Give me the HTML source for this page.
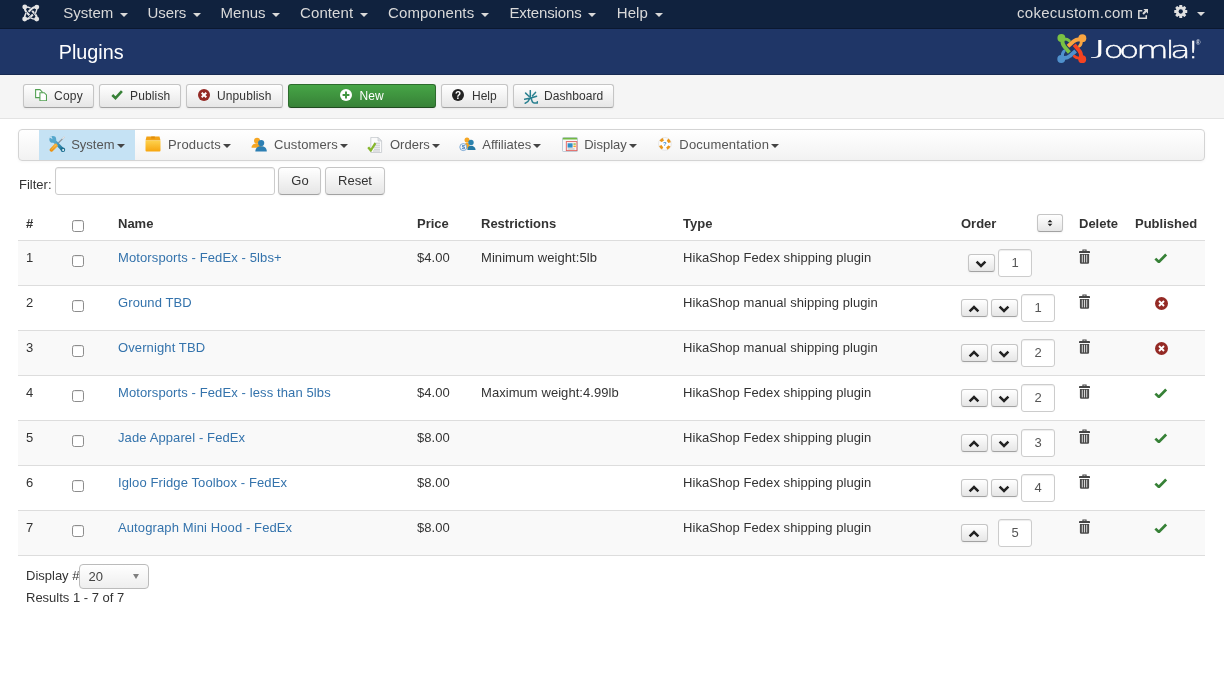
<!DOCTYPE html>
<html lang="en"><head><meta charset="utf-8"><title>Plugins</title>
<style>
*{box-sizing:border-box}
html,body{margin:0;padding:0}
#w{position:absolute;left:0;top:0;width:1224px;height:681px;will-change:transform}
body{width:1224px;height:681px;overflow:hidden;background:#fff;font-family:"Liberation Sans",Arial,sans-serif;font-size:13px;line-height:18px;color:#333;position:relative}
a{color:#3071a9;text-decoration:none}
svg{display:block}
.nav{position:absolute;left:0;top:0;width:1224px;height:28px;background:#10223e}
.nav .it{position:absolute;top:0;height:28px;line-height:25px;font-size:15px;letter-spacing:.12px;color:#d9d9d9;white-space:nowrap}
.caret{display:inline-block;width:0;height:0;border-left:4px solid transparent;border-right:4px solid transparent;border-top:4px solid #d9d9d9;vertical-align:middle;margin-left:2.5px;margin-top:1px}
.hdr{position:absolute;left:0;top:28px;width:1224px;height:47px;background:#1f3667;border-top:1px solid #0b1830;border-bottom:1px solid #172a52}
.hdr h1{position:absolute;left:58.7px;top:0;margin:0;font-weight:normal;font-size:19.8px;line-height:46px;color:#fff}
.sub{position:absolute;left:0;top:75px;width:1224px;height:44px;background:#f5f5f5;border-bottom:1px solid #e3e3e3}
.btn{position:absolute;top:9px;height:24px;border:1px solid #bbb;border-color:#c5c5c5 #c5c5c5 #a2a2a2;border-radius:3px;background:linear-gradient(#fff,#e6e6e6);font-size:12px;line-height:22px;color:#333;white-space:nowrap;box-shadow:0 1px 2px rgba(0,0,0,.05)}
.btn span{position:absolute;top:0}
.btn svg{position:absolute}
.btn.green{background:linear-gradient(#46a546,#378137);border-color:#2d6b2d #2d6b2d #1f4a1f;color:#fff}
.menu{position:absolute;left:18px;top:129px;width:1187px;height:32px;border:1px solid #d4d4d4;border-radius:4px;background:linear-gradient(#fff,#f2f2f2);box-shadow:0 1px 3px rgba(0,0,0,.04)}
.menu .mi{position:absolute;top:0;height:30px;line-height:29.500px;font-size:13px;color:#555;white-space:nowrap}
.menu .act{position:absolute;left:20px;top:0;width:96px;height:30px;background:#c5e2f4}
.menu svg{position:absolute}
.c2{display:inline-block;width:0;height:0;border-left:4px solid transparent;border-right:4px solid transparent;border-top:4px solid #444;vertical-align:middle;margin-left:2px}
.flt{position:absolute;left:19px;top:176px;font-size:13px}
.finp{position:absolute;left:55px;top:167px;width:220px;height:28px;border:1px solid #ccc;border-radius:3px;background:#fff;box-shadow:inset 0 1px 1px rgba(0,0,0,.075)}
.fbtn{position:absolute;top:167px;height:28px;border:1px solid #bbb;border-color:#c5c5c5 #c5c5c5 #a2a2a2;border-radius:4px;background:linear-gradient(#fff,#e6e6e6);font-size:13px;line-height:26px;text-align:center;color:#333;box-shadow:0 1px 2px rgba(0,0,0,.05)}
.tbl{position:absolute;left:18px;top:206px;width:1187px;height:350px}
.th{position:absolute;top:9px;font-weight:bold;white-space:nowrap}
.row{position:absolute;left:0;width:1187px;height:45px;border-top:1px solid #ddd}
.row.odd{background:#f9f9f9}
.tbl{border-bottom:1px solid #ddd}
.td{position:absolute;top:8px;white-space:nowrap;letter-spacing:.06px}
.td a{letter-spacing:.11px;color:#3473ac}
.cb{position:absolute;left:54px;width:12px;height:12px;border:1px solid #8d8d8d;border-radius:2.5px;background:#fff;box-shadow:inset 0 1px 1px rgba(0,0,0,.08)}
.ob{position:absolute;top:13px;width:27px;height:18px;border:1px solid #bbb;border-color:#c5c5c5 #c5c5c5 #a2a2a2;border-radius:3px;background:linear-gradient(#fff,#e6e6e6);box-shadow:0 1px 2px rgba(0,0,0,.05)}
.ob svg{position:absolute;left:6px;top:4.500px}
.sbtn{width:26px}
.sbtn svg{left:9px;top:4px}
.oi{position:absolute;top:8px;width:34px;height:28px;border:1px solid #ccc;border-radius:3px;background:#fff;text-align:center;line-height:26px;color:#555;box-shadow:inset 0 1px 1px rgba(0,0,0,.075)}
.trash{position:absolute;left:1061px;top:8px}
.pub{position:absolute;left:1136.300px;top:11.800px}
.unpub{position:absolute;left:1137px;top:11px}
.foot1{position:absolute;left:26px;top:567px}
.foot2{position:absolute;left:26px;top:589px}
.sel{position:absolute;left:79px;top:564px;width:70px;height:25px;border:1px solid #bbb;border-radius:4px;background:linear-gradient(#fff,#eee);padding-left:8.500px;line-height:24px;color:#444}
.sel i{position:absolute;right:9px;top:9px;width:0;height:0;border-left:3.800px solid transparent;border-right:3.800px solid transparent;border-top:5px solid #808080}
</style></head><body><div id="w">
<div class="nav">
 <svg style="position:absolute;left:20.200px;top:3.100px" viewBox="0 0 717 681" width="22.200" height="21.100">
  <defs><g id="jw"><g fill="none" stroke="#10223e" stroke-linejoin="round"><path d="M155 130Q148 235 200 287L312 405" stroke-width="92"/><path d="M155 130Q265 120 350 172" stroke-width="66" stroke-linecap="round"/></g><g fill="none" stroke="#e4e4e4" stroke-linejoin="round"><path d="M155 130Q148 235 200 287L303 396" stroke-width="68"/><path d="M155 130Q265 120 350 172" stroke-width="48" stroke-linecap="round"/><circle cx="155" cy="130" r="80" fill="#e4e4e4" stroke="none"/></g></g></defs>
  <use href="#jw"/><use href="#jw" transform="rotate(270 347.500 325)"/><use href="#jw" transform="rotate(180 347.500 325)"/><use href="#jw" transform="rotate(90 347.500 325)"/>
 </svg>
 <span class="it" style="left:63.3px;letter-spacing:0">System <span class="caret"></span></span>
 <span class="it" style="left:147.5px;letter-spacing:-.08px">Users <span class="caret"></span></span>
 <span class="it" style="left:220.6px;letter-spacing:0">Menus <span class="caret"></span></span>
 <span class="it" style="left:300.1px;letter-spacing:.07px">Content <span class="caret"></span></span>
 <span class="it" style="left:388px">Components <span class="caret"></span></span>
 <span class="it" style="left:509.4px;letter-spacing:-.11px">Extensions <span class="caret"></span></span>
 <span class="it" style="left:616.7px">Help <span class="caret"></span></span>
 <span class="it" style="left:1017px;letter-spacing:.27px">cokecustom.com</span>
 <svg style="position:absolute;left:1138px;top:8.500px" viewBox="0 0 10 10" width="10" height="10"><path d="M4.300 1.700H.8v7.500h7.500V6.200" fill="none" stroke="#d9d9d9" stroke-width="1.500"/><path d="M5.300 0h4.700v4.700L8.400 3.100 5.800 5.700 4.300 4.200 6.900 1.600z" fill="#d9d9d9"/></svg>
 <svg style="position:absolute;left:1174px;top:5px" viewBox="0 0 14 14" width="13.500" height="13"><g fill="#e0e0e0"><circle cx="7" cy="7" r="5.300"/><g id="gt"><rect x="5.400" y="0" width="3.200" height="14" rx=".6"/><rect x="0" y="5.400" width="14" height="3.200" rx=".6"/></g><use href="#gt" transform="rotate(45 7 7)"/></g><circle cx="7" cy="7" r="2.300" fill="#10223e"/></svg>
 <span class="caret" style="position:absolute;left:1197px;top:12px;margin:0"></span>
</div>
<div class="hdr"><h1>Plugins</h1>
 <svg style="position:absolute;left:1052.800px;top:1.900px" viewBox="0 0 717 681" width="38.800" height="36.850">
  <defs><g id="jp" fill="none" stroke="currentColor" stroke-linejoin="round"><path d="M176 150Q166 240 212 290L303 396" stroke-width="72"/><path d="M176 150Q262 140 300 182" stroke-width="54" stroke-linecap="round"/><circle cx="155" cy="130" r="73" fill="currentColor" stroke="none"/></g></defs>
  <use href="#jp" color="#7ac143"/>
  <use href="#jp" color="#5091cd" transform="rotate(270 347.500 325)"/>
  <use href="#jp" color="#f44321" transform="rotate(180 347.500 325)"/>
  <use href="#jp" color="#f9a541" transform="rotate(90 347.500 325)"/>
 </svg>
 <svg style="position:absolute;left:1088px;top:4px;overflow:visible" width="124" height="36"><g transform="translate(10.800 24.800) scale(1.400 1)"><text x="0" y="0" font-family="'DejaVu Sans Light','DejaVu Sans',sans-serif" font-weight="200" font-size="23.800" fill="#fff" stroke="#fff" stroke-width=".4" dx="-5.700 -3.900 -3.600 -2.200 -2.200 -3.300 -3"><tspan font-size="19.500" dy="-3.900" textLength="13" lengthAdjust="spacingAndGlyphs" stroke="none">J</tspan><tspan dy="3.900">oomla!</tspan></text></g>
  <text x="107.700" y="11.800" font-family="'Liberation Sans',sans-serif" font-weight="bold" font-size="6.500" fill="#d4dbe8">®</text>
 </svg>
</div>
<div class="sub">
 <div class="btn" style="left:23px;width:71px"><svg style="left:11px;top:3.500px" viewBox="0 0 12 12" width="12.300" height="12.300"><g fill="#fff" stroke="#52a052" stroke-width="1.050"><path d="M.6 .6h4.200l2.200 2.200v5.600H.6z"/><path d="M4.800 3.600h4.200l2.200 2.200v5.600H4.800z"/></g></svg><span style="left:30px;letter-spacing:.25px">Copy</span></div>
 <div class="btn" style="left:99px;width:82px"><svg style="left:10.800px;top:5px" viewBox="0 0 12 9.500" width="12" height="9.500"><path d="M1.300 5l3.200 3.100 6.400-6.900" fill="none" stroke="#378137" stroke-width="2.600"/></svg><span style="left:30px;letter-spacing:.14px">Publish</span></div>
 <div class="btn" style="left:186px;width:97px"><svg style="left:11px;top:4px" viewBox="0 0 13 13" width="12" height="12"><circle cx="6.500" cy="6.500" r="6.500" fill="#942a25"/><path d="M4 4l5 5M9 4l-5 5" stroke="#fff" stroke-width="2.100"/></svg><span style="left:30px;letter-spacing:.12px">Unpublish</span></div>
 <div class="btn green" style="left:288px;width:148px"><svg style="left:51px;top:4px" viewBox="0 0 12 12" width="12" height="12"><circle cx="6" cy="6" r="6" fill="#fff"/><path d="M6 2.600v6.800M2.600 6h6.800" stroke="#3f953f" stroke-width="1.900"/></svg><span style="left:70.500px;letter-spacing:.1px">New</span></div>
 <div class="btn" style="left:441px;width:67px"><svg style="left:10px;top:4px" viewBox="0 0 12 12" width="12" height="12"><circle cx="6" cy="6" r="6" fill="#222"/><text x="6" y="9.600" text-anchor="middle" font-family="'Liberation Sans',sans-serif" font-weight="bold" font-size="10" fill="#fff">?</text></svg><span style="left:30px">Help</span></div>
 <div class="btn" style="left:513px;width:101px"><svg style="left:10px;top:5px" viewBox="0 0 14 14" width="14" height="14"><g fill="none" stroke="#2a8090" stroke-width="1.500" stroke-linecap="round" stroke-linejoin="round"><path d="M6.300 .6V8.600M1.600 3.100L4.900 6.200M11.500 2.400L8.500 5.800M.6 9.300Q7 8.300 12.600 6.200M5.800 8.600Q4.500 12 1.200 13.300M7.300 8.100Q7.800 12.600 10.200 13.100H13.300V11.700"/></g></svg><span style="left:30px;letter-spacing:.05px">Dashboard</span></div>
</div>
<div class="menu"><div class="act"></div>
 <svg style="left:30px;top:6px" viewBox="0 0 16.500 16.500" width="16.500" height="16.500"><defs><linearGradient id="og" x1="1" y1="0" x2="0" y2="1"><stop offset="0" stop-color="#f7b740"/><stop offset="1" stop-color="#e98a06"/></linearGradient><linearGradient id="wg" x1="0" y1="0" x2="1" y2="1"><stop offset="0" stop-color="#5aabd0"/><stop offset=".5" stop-color="#3b8fb5"/><stop offset="1" stop-color="#1c6f90"/></linearGradient></defs><path d="M15.200 1.100L8 8.300" stroke="#8f9499" stroke-width="1.300" stroke-linecap="round"/><path d="M15.400 .9l-1.600 1.600" stroke="#e6e8ea" stroke-width="1.300" stroke-linecap="round"/><path d="M5.500 5.200L13.700 13.600" stroke="url(#wg)" stroke-width="3.500" stroke-linecap="round"/><circle cx="3.800" cy="3.400" r="3.400" fill="#55a7cc"/><path d="M.2 1.200L3.600 3.200 2.400 .1z" fill="#c5e2f4"/><circle cx="13.900" cy="13.700" r="2.300" fill="#1d7091"/><circle cx="14.100" cy="13.900" r="1" fill="#eef7fc"/><path d="M8.600 8.900L7.300 7.600Q6.300 7.200 5.500 8L.9 12.900Q.1 14 1 15.100 2.200 16.300 3.400 15.400L8.300 10.800Q9.100 9.800 8.600 8.900z" fill="url(#og)"/><path d="M6.500 9.200L2.700 13.300" stroke="#fbd58a" stroke-width=".8" stroke-dasharray="1 .7"/></svg>
 <span class="mi" style="left:52.200px">System<span class="c2"></span></span>
 <svg style="left:125.500px;top:6.200px" viewBox="0 0 16 16" width="16" height="16"><defs><linearGradient id="bx" x1="0" y1="0" x2="0" y2="1"><stop offset="0" stop-color="#fdd24e"/><stop offset="1" stop-color="#f7a50e"/></linearGradient></defs><path d="M1.5 0.5h13l1 4H.5z" fill="#f2a216"/><rect x=".5" y="4.5" width="15" height="11" rx="1" fill="url(#bx)"/><rect x="6.2" y=".5" width="3.6" height="2" fill="#e08d0a"/></svg>
 <span class="mi" style="left:149px;letter-spacing:.2px">Products<span class="c2"></span></span>
 <svg style="left:232px;top:7px" viewBox="0 0 17 16" width="16" height="15"><circle cx="6.4" cy="4" r="3.2" fill="#f5a623"/><path d="M.5 11.5c0-3 2.4-4.6 5.9-4.6s5 1.600 5 4.600z" fill="#f5a623"/><circle cx="10.8" cy="6.400" r="3.300" fill="#2d7fb3"/><path d="M4.600 15.500c0-3.800 2.600-5.600 6.200-5.600s6 1.800 6 5.600z" fill="#2d7fb3"/></svg>
 <span class="mi" style="left:255px;letter-spacing:.1px">Customers<span class="c2"></span></span>
 <svg style="left:348px;top:6.500px" viewBox="0 0 16 16" width="16" height="16"><path d="M3.800 .4h7.200l3.600 3.600v11.500H3.800z" fill="#fbfbfb" stroke="#c3c7cb" stroke-width=".8"/><path d="M11 .4v3.600h3.600z" fill="#e3e6e9" stroke="#c3c7cb" stroke-width=".7"/><path d="M7 6.200h6M7 8.200h6M7 10.200h6M7 12.200h6M6 14h7" stroke="#b4b8bd" stroke-width=".8"/><path d="M1.200 10.200l2.600 3.300 4.600-7.300" fill="none" stroke="#86b62c" stroke-width="2.300" stroke-linejoin="round"/></svg>
 <span class="mi" style="left:371px">Orders<span class="c2"></span></span>
 <svg style="left:440.300px;top:6.500px" viewBox="0 0 17 16" width="17" height="16"><circle cx="8" cy="3" r="2.500" fill="#f5a623"/><path d="M5.300 11.500c-.2-3.800 .8-6 2.800-6s2.800 2 2.800 6z" fill="#f5a623"/><circle cx="12" cy="5.400" r="2.700" fill="#2b82ad"/><path d="M8.400 13c0-1.900 .6-3.300 2.300-4.300h2.600c1.700 1 3.300 1.800 3.300 4.300z" fill="#2479a4"/><circle cx="4.300" cy="10.100" r="3.500" fill="#f2f7fc" stroke="#6fa0cf" stroke-width=".9"/><text x="4.300" y="12.300" text-anchor="middle" font-family="'Liberation Sans',sans-serif" font-size="6" font-weight="bold" fill="#3b77b5">$</text></svg>
 <span class="mi" style="left:463.300px">Affiliates<span class="c2"></span></span>
 <svg style="left:543px;top:6.800px" viewBox="0 0 16 15" width="16" height="15"><rect x=".4" y=".4" width="15.200" height="14.200" rx="1.300" fill="#f7f8f9" stroke="#a9bccb" stroke-width=".8"/><path d="M.8 1.600a.8 .8 0 0 1 .8-.8h12.800a.8 .8 0 0 1 .8 .8v.9H.8z" fill="#73b943"/><rect x="4.300" y="4.600" width="10.600" height="9" fill="#fdf3f3" stroke="#e0605c" stroke-width=".9"/><rect x="5.600" y="6.300" width="5" height="4.300" fill="#2f8fc8"/><rect x="11.400" y="6.300" width="2.400" height="1.500" fill="#8cc152"/><rect x="11.400" y="8.600" width="2.400" height="1.500" fill="#f5a623"/><path d="M5.600 12h7" stroke="#9aa" stroke-width=".8"/></svg>
 <span class="mi" style="left:565.200px">Display<span class="c2"></span></span>
 <svg style="left:639.100px;top:7.100px" viewBox="0 0 15 15" width="13.800" height="13.800"><circle cx="7.500" cy="7.500" r="7" fill="#fbfbfb" stroke="#dcdcdc" stroke-width=".7"/><circle cx="7.500" cy="7.500" r="5.100" fill="none" stroke="#e9961a" stroke-width="3.400" stroke-dasharray="3.500 4.511" stroke-dashoffset="-2.255"/><circle cx="7.500" cy="7.500" r="3.500" fill="#fff"/><text x="7.500" y="9.800" text-anchor="middle" font-family="'Liberation Sans',sans-serif" font-size="6.500" font-weight="bold" fill="#3f8fd0">?</text></svg>
 <span class="mi" style="left:660.300px;letter-spacing:.19px">Documentation<span class="c2"></span></span>
</div>
<div class="flt">Filter:</div><div class="finp"></div>
<div class="fbtn" style="left:278px;width:43px;padding-left:1px">Go</div><div class="fbtn" style="left:325px;width:60px">Reset</div>
<div class="tbl">
<div class="th" style="left:8px">#</div><span class="cb" style="top:14px"></span><div class="th" style="left:100px">Name</div><div class="th" style="left:399px">Price</div><div class="th" style="left:463px">Restrictions</div><div class="th" style="left:665px">Type</div><div class="th" style="left:943px">Order</div><div class="sbtn ob" style="left:1019px;top:8px"><svg viewBox="0 0 6 8" width="6" height="8"><path d="M0.6 3.2L3 0.8l2.4 2.4zM0.6 4.8L3 7.2l2.4-2.4z" fill="#222"/></svg></div><div class="th" style="left:1061px">Delete</div><div class="th" style="left:1117px">Published</div>
<div class="row odd" style="top:34px"><div class="td" style="left:8px">1</div><span class="cb" style="top:14px"></span><div class="td" style="left:100px"><a>Motorsports - FedEx - 5lbs+</a></div><div class="td" style="left:399px">$4.00</div><div class="td" style="left:463px">Minimum weight:5lb</div><div class="td" style="left:665px">HikaShop Fedex shipping plugin</div><div class="ob" style="left:950px"><svg viewBox="0 0 12 8" width="12" height="8"><path d="M1.6 1.6L6 6l4.4-4.4" fill="none" stroke="#222" stroke-width="2.500"/></svg></div><div class="oi" style="left:980px">1</div><svg class="trash" viewBox="0 0 11 15" width="11" height="15"><path d="M3.400 .4h4.200v2h-1.100v-.9h-2v.9H3.400z" fill="#444"/><rect x="0" y="2.100" width="11" height="2" rx=".4" fill="#444"/><path d="M.9 4.900h9.200v8.600a1.200 1.200 0 0 1-1.200 1.200H2.100a1.200 1.200 0 0 1-1.200-1.200z" fill="#4a4a4a"/><path d="M3.300 5.800v7.600M5.500 5.800v7.600M7.700 5.800v7.600" stroke="#e8e8e8" stroke-width=".9"/></svg><svg class="pub" viewBox="0 0 13 10" width="13.500" height="10.400"><path d="M1.300 5.400l3.400 3.200 7-7.200" fill="none" stroke="#378137" stroke-width="2.600"/></svg></div>
<div class="row" style="top:79px"><div class="td" style="left:8px">2</div><span class="cb" style="top:14px"></span><div class="td" style="left:100px"><a>Ground TBD</a></div><div class="td" style="left:665px">HikaShop manual shipping plugin</div><div class="ob" style="left:943px"><svg viewBox="0 0 12 8" width="12" height="8"><path d="M1.6 6.4L6 2l4.4 4.4" fill="none" stroke="#222" stroke-width="2.500"/></svg></div><div class="ob" style="left:973px"><svg viewBox="0 0 12 8" width="12" height="8"><path d="M1.6 1.6L6 6l4.4-4.4" fill="none" stroke="#222" stroke-width="2.500"/></svg></div><div class="oi" style="left:1003px">1</div><svg class="trash" viewBox="0 0 11 15" width="11" height="15"><path d="M3.400 .4h4.200v2h-1.100v-.9h-2v.9H3.400z" fill="#444"/><rect x="0" y="2.100" width="11" height="2" rx=".4" fill="#444"/><path d="M.9 4.900h9.200v8.600a1.200 1.200 0 0 1-1.200 1.200H2.100a1.200 1.200 0 0 1-1.200-1.200z" fill="#4a4a4a"/><path d="M3.300 5.800v7.600M5.500 5.800v7.600M7.700 5.800v7.600" stroke="#e8e8e8" stroke-width=".9"/></svg><svg class="unpub" viewBox="0 0 13 13" width="13" height="13"><circle cx="6.5" cy="6.5" r="6.5" fill="#942a25"/><path d="M4 4l5 5M9 4l-5 5" stroke="#fff" stroke-width="1.9"/></svg></div>
<div class="row odd" style="top:124px"><div class="td" style="left:8px">3</div><span class="cb" style="top:14px"></span><div class="td" style="left:100px"><a>Overnight TBD</a></div><div class="td" style="left:665px">HikaShop manual shipping plugin</div><div class="ob" style="left:943px"><svg viewBox="0 0 12 8" width="12" height="8"><path d="M1.6 6.4L6 2l4.4 4.4" fill="none" stroke="#222" stroke-width="2.500"/></svg></div><div class="ob" style="left:973px"><svg viewBox="0 0 12 8" width="12" height="8"><path d="M1.6 1.6L6 6l4.4-4.4" fill="none" stroke="#222" stroke-width="2.500"/></svg></div><div class="oi" style="left:1003px">2</div><svg class="trash" viewBox="0 0 11 15" width="11" height="15"><path d="M3.400 .4h4.200v2h-1.100v-.9h-2v.9H3.400z" fill="#444"/><rect x="0" y="2.100" width="11" height="2" rx=".4" fill="#444"/><path d="M.9 4.900h9.200v8.600a1.200 1.200 0 0 1-1.200 1.200H2.100a1.200 1.200 0 0 1-1.200-1.200z" fill="#4a4a4a"/><path d="M3.300 5.800v7.600M5.500 5.800v7.600M7.700 5.800v7.600" stroke="#e8e8e8" stroke-width=".9"/></svg><svg class="unpub" viewBox="0 0 13 13" width="13" height="13"><circle cx="6.5" cy="6.5" r="6.5" fill="#942a25"/><path d="M4 4l5 5M9 4l-5 5" stroke="#fff" stroke-width="1.9"/></svg></div>
<div class="row" style="top:169px"><div class="td" style="left:8px">4</div><span class="cb" style="top:14px"></span><div class="td" style="left:100px"><a>Motorsports - FedEx - less than 5lbs</a></div><div class="td" style="left:399px">$4.00</div><div class="td" style="left:463px">Maximum weight:4.99lb</div><div class="td" style="left:665px">HikaShop Fedex shipping plugin</div><div class="ob" style="left:943px"><svg viewBox="0 0 12 8" width="12" height="8"><path d="M1.6 6.4L6 2l4.4 4.4" fill="none" stroke="#222" stroke-width="2.500"/></svg></div><div class="ob" style="left:973px"><svg viewBox="0 0 12 8" width="12" height="8"><path d="M1.6 1.6L6 6l4.4-4.4" fill="none" stroke="#222" stroke-width="2.500"/></svg></div><div class="oi" style="left:1003px">2</div><svg class="trash" viewBox="0 0 11 15" width="11" height="15"><path d="M3.400 .4h4.200v2h-1.100v-.9h-2v.9H3.400z" fill="#444"/><rect x="0" y="2.100" width="11" height="2" rx=".4" fill="#444"/><path d="M.9 4.900h9.200v8.600a1.200 1.200 0 0 1-1.200 1.200H2.100a1.200 1.200 0 0 1-1.200-1.200z" fill="#4a4a4a"/><path d="M3.300 5.800v7.600M5.500 5.800v7.600M7.700 5.800v7.600" stroke="#e8e8e8" stroke-width=".9"/></svg><svg class="pub" viewBox="0 0 13 10" width="13.500" height="10.400"><path d="M1.300 5.400l3.400 3.200 7-7.200" fill="none" stroke="#378137" stroke-width="2.600"/></svg></div>
<div class="row odd" style="top:214px"><div class="td" style="left:8px">5</div><span class="cb" style="top:14px"></span><div class="td" style="left:100px"><a>Jade Apparel - FedEx</a></div><div class="td" style="left:399px">$8.00</div><div class="td" style="left:665px">HikaShop Fedex shipping plugin</div><div class="ob" style="left:943px"><svg viewBox="0 0 12 8" width="12" height="8"><path d="M1.6 6.4L6 2l4.4 4.4" fill="none" stroke="#222" stroke-width="2.500"/></svg></div><div class="ob" style="left:973px"><svg viewBox="0 0 12 8" width="12" height="8"><path d="M1.6 1.6L6 6l4.4-4.4" fill="none" stroke="#222" stroke-width="2.500"/></svg></div><div class="oi" style="left:1003px">3</div><svg class="trash" viewBox="0 0 11 15" width="11" height="15"><path d="M3.400 .4h4.200v2h-1.100v-.9h-2v.9H3.400z" fill="#444"/><rect x="0" y="2.100" width="11" height="2" rx=".4" fill="#444"/><path d="M.9 4.900h9.200v8.600a1.200 1.200 0 0 1-1.200 1.200H2.100a1.200 1.200 0 0 1-1.200-1.200z" fill="#4a4a4a"/><path d="M3.300 5.800v7.600M5.500 5.800v7.600M7.700 5.800v7.600" stroke="#e8e8e8" stroke-width=".9"/></svg><svg class="pub" viewBox="0 0 13 10" width="13.500" height="10.400"><path d="M1.300 5.400l3.400 3.200 7-7.200" fill="none" stroke="#378137" stroke-width="2.600"/></svg></div>
<div class="row" style="top:259px"><div class="td" style="left:8px">6</div><span class="cb" style="top:14px"></span><div class="td" style="left:100px"><a>Igloo Fridge Toolbox - FedEx</a></div><div class="td" style="left:399px">$8.00</div><div class="td" style="left:665px">HikaShop Fedex shipping plugin</div><div class="ob" style="left:943px"><svg viewBox="0 0 12 8" width="12" height="8"><path d="M1.6 6.4L6 2l4.4 4.4" fill="none" stroke="#222" stroke-width="2.500"/></svg></div><div class="ob" style="left:973px"><svg viewBox="0 0 12 8" width="12" height="8"><path d="M1.6 1.6L6 6l4.4-4.4" fill="none" stroke="#222" stroke-width="2.500"/></svg></div><div class="oi" style="left:1003px">4</div><svg class="trash" viewBox="0 0 11 15" width="11" height="15"><path d="M3.400 .4h4.200v2h-1.100v-.9h-2v.9H3.400z" fill="#444"/><rect x="0" y="2.100" width="11" height="2" rx=".4" fill="#444"/><path d="M.9 4.900h9.200v8.600a1.200 1.200 0 0 1-1.200 1.200H2.100a1.200 1.200 0 0 1-1.200-1.200z" fill="#4a4a4a"/><path d="M3.300 5.800v7.600M5.500 5.800v7.600M7.700 5.800v7.600" stroke="#e8e8e8" stroke-width=".9"/></svg><svg class="pub" viewBox="0 0 13 10" width="13.500" height="10.400"><path d="M1.300 5.400l3.400 3.200 7-7.200" fill="none" stroke="#378137" stroke-width="2.600"/></svg></div>
<div class="row odd" style="top:304px"><div class="td" style="left:8px">7</div><span class="cb" style="top:14px"></span><div class="td" style="left:100px"><a>Autograph Mini Hood - FedEx</a></div><div class="td" style="left:399px">$8.00</div><div class="td" style="left:665px">HikaShop Fedex shipping plugin</div><div class="ob" style="left:943px"><svg viewBox="0 0 12 8" width="12" height="8"><path d="M1.6 6.4L6 2l4.4 4.4" fill="none" stroke="#222" stroke-width="2.500"/></svg></div><div class="oi" style="left:980px">5</div><svg class="trash" viewBox="0 0 11 15" width="11" height="15"><path d="M3.400 .4h4.200v2h-1.100v-.9h-2v.9H3.400z" fill="#444"/><rect x="0" y="2.100" width="11" height="2" rx=".4" fill="#444"/><path d="M.9 4.900h9.200v8.600a1.200 1.200 0 0 1-1.200 1.200H2.100a1.200 1.200 0 0 1-1.200-1.200z" fill="#4a4a4a"/><path d="M3.300 5.800v7.600M5.500 5.800v7.600M7.700 5.800v7.600" stroke="#e8e8e8" stroke-width=".9"/></svg><svg class="pub" viewBox="0 0 13 10" width="13.500" height="10.400"><path d="M1.300 5.400l3.400 3.200 7-7.200" fill="none" stroke="#378137" stroke-width="2.600"/></svg></div>
</div>
<div class="foot1">Display #</div><div class="sel">20<i></i></div><div class="foot2">Results 1 - 7 of 7</div>
</div></body></html>
